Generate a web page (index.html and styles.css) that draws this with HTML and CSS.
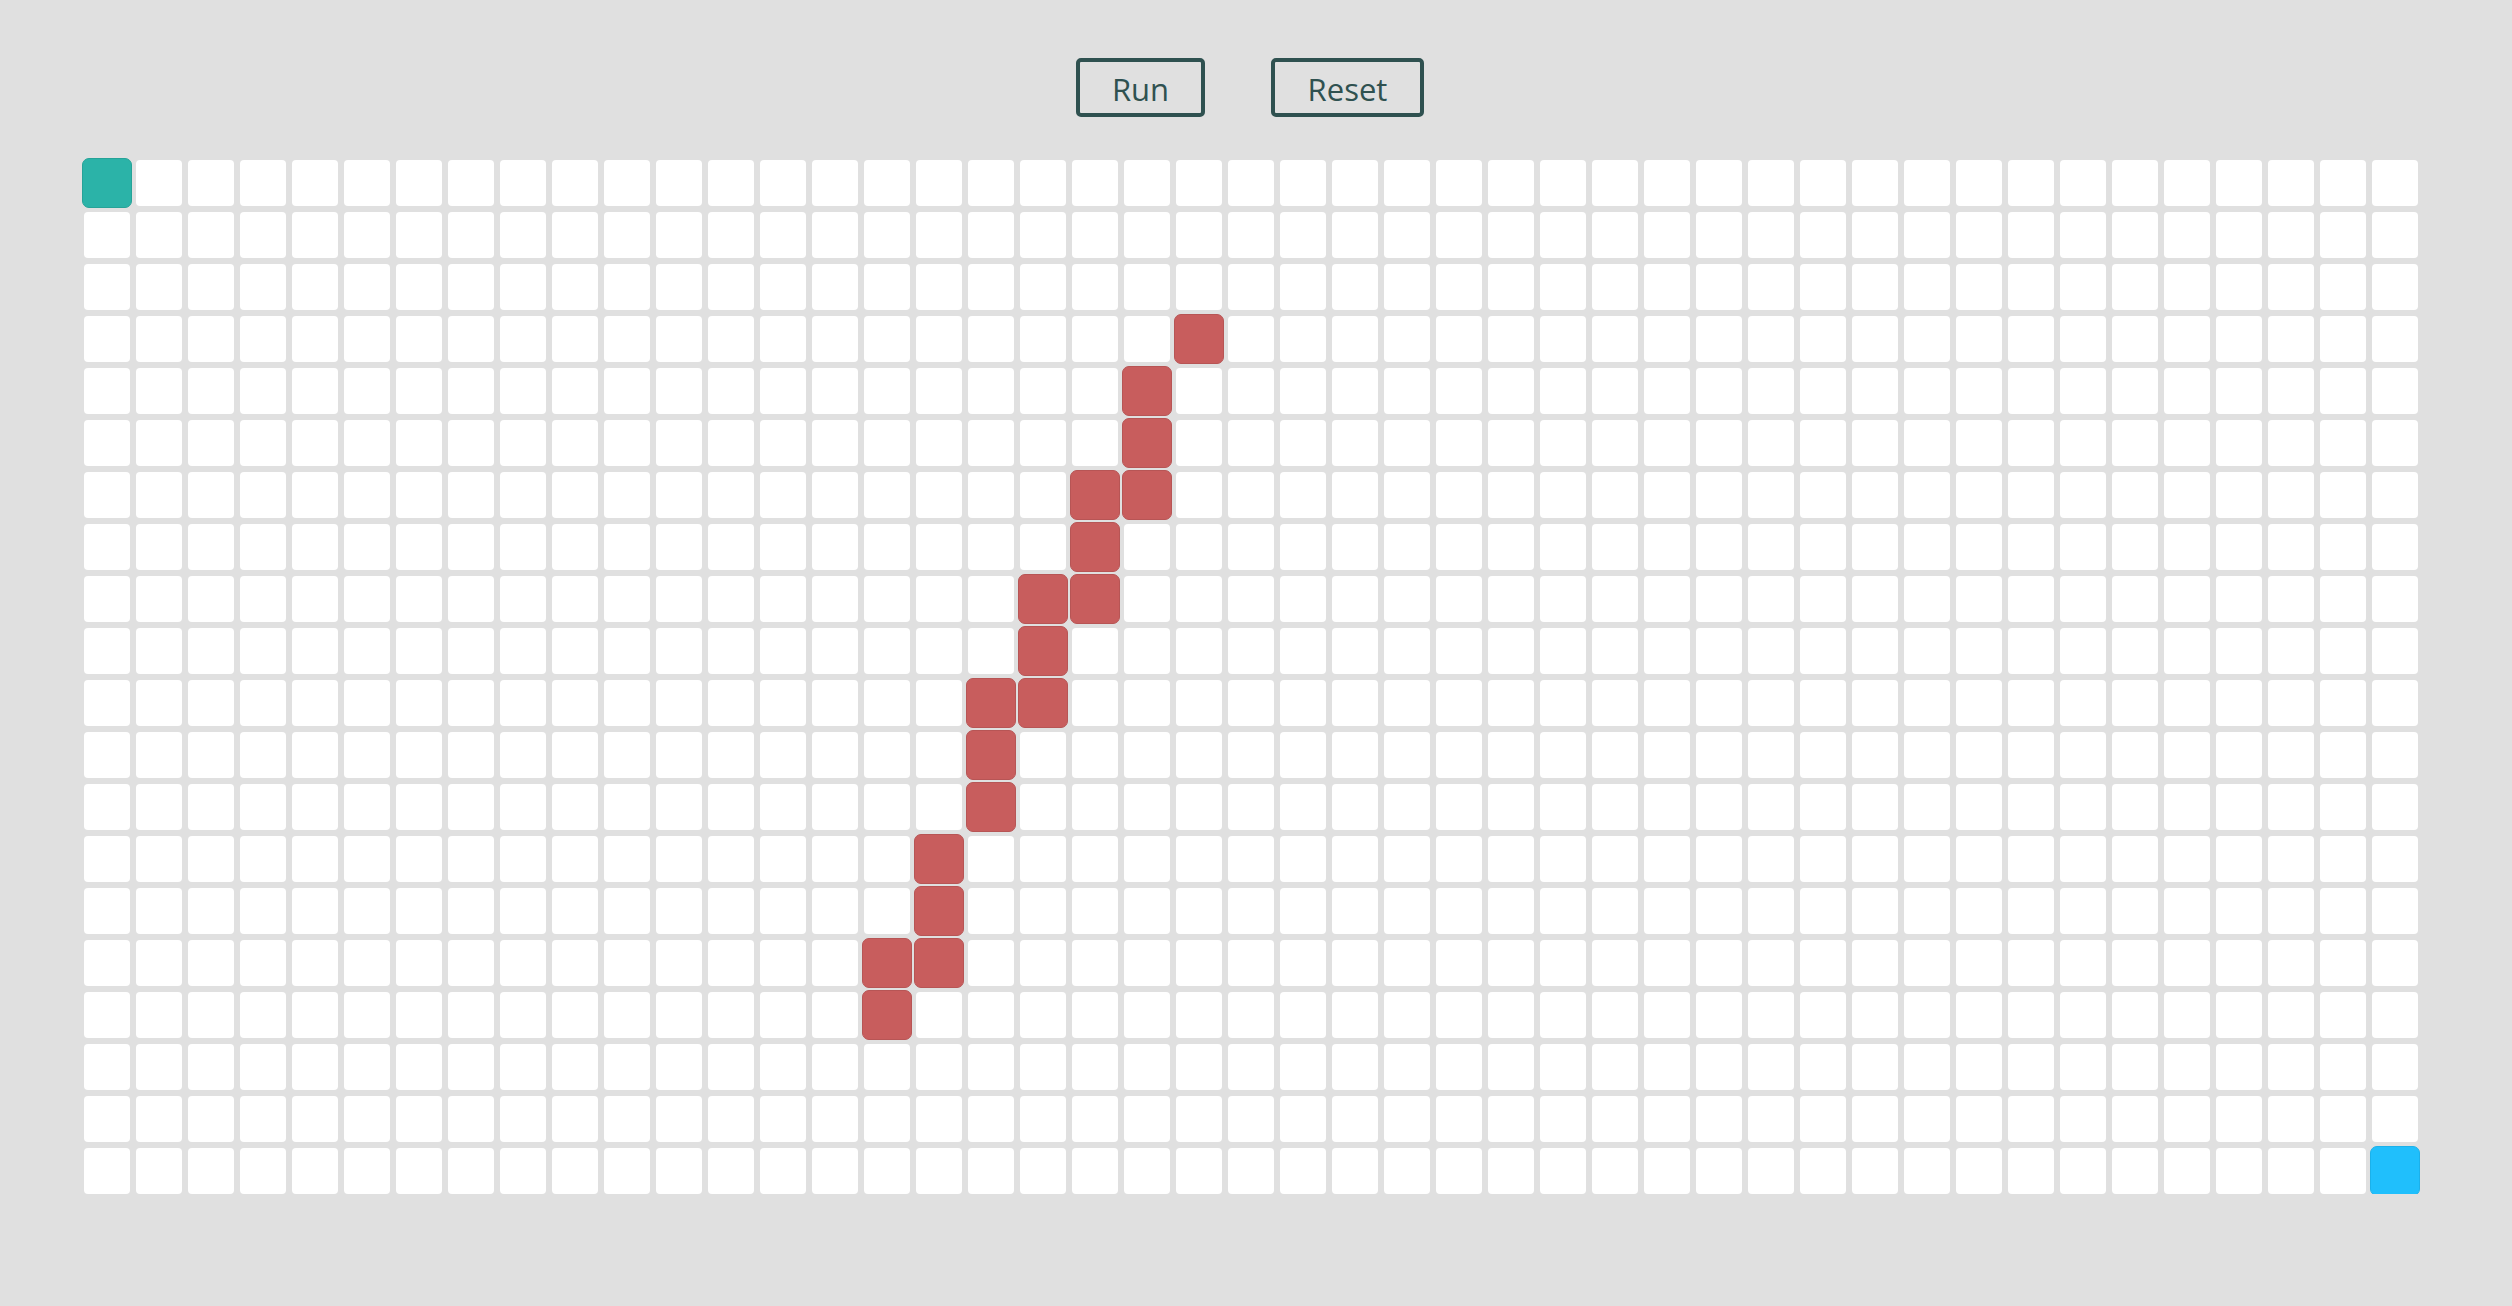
FILE: index.html
```html
<!DOCTYPE html>
<html lang="en">
<head>
<meta charset="utf-8">
<title>Pathfinding</title>
<link rel="stylesheet" href="styles.css">
</head>
<body>
<main class="app">
  <div class="controls">
    <button class="btn btn-run">Run</button>
    <button class="btn btn-reset">Reset</button>
  </div>
  <div class="grid" id="grid"></div>
</main>
<script src="script.js"></script>
</body>
</html>
```
FILE: styles.css
```css
html, body {
  margin: 0;
  padding: 0;
  background: #e0e0e0;
  font-family: "Open Sans", Lato, "Liberation Sans", sans-serif;
}

.app {
  padding: 58px 0 0 84px;
  width: 2334px;
}

.controls {
  display: flex;
  justify-content: center;
  gap: 66px;
  height: 59px;
  margin-bottom: 43px;
  padding-right: 2px;
}

.btn {
  box-sizing: border-box;
  height: 59px;
  border: 4px solid #2f5150;
  border-radius: 5px;
  background: transparent;
  color: #2f5150;
  font-family: "Open Sans", Lato, "Liberation Sans", sans-serif;
  font-size: 31px;
  line-height: 1;
  padding: 3px 0 0;
  cursor: pointer;
}

.btn-run { width: 129px; }
.btn-reset { width: 153px; }

.grid {
  display: grid;
  grid-template-columns: repeat(45, 46px);
  grid-auto-rows: 46px;
  gap: 6px;
}

.cell {
  background: #ffffff;
  border-radius: 4px;
  position: relative;
}

.cell.wall,
.cell.start,
.cell.end {
  margin: -2px;
  border-radius: 7px;
  border: 1px solid transparent;
}

.cell.wall {
  background: #c85d5d;
  border-color: #b75555;
}

.cell.start {
  background: #2bb3a8;
  border-color: #26a398;
}

.cell.end {
  background: #20bffc;
  border-color: #1cb1ea;
}
```
FILE: script.js
```js
(function () {
  var cols = 45, rows = 20;
  var walls = [
    [3,21],[4,20],[5,20],[6,19],[6,20],[7,19],[8,18],[8,19],[9,18],
    [10,17],[10,18],[11,17],[12,17],[13,16],[14,16],[15,15],[15,16],[16,15]
  ];
  var set = {};
  walls.forEach(function (w) { set[w[0] + ',' + w[1]] = true; });
  var grid = document.getElementById('grid');
  for (var r = 0; r < rows; r++) {
    for (var c = 0; c < cols; c++) {
      var d = document.createElement('div');
      d.className = 'cell';
      if (r === 0 && c === 0) d.className += ' start';
      else if (r === rows - 1 && c === cols - 1) d.className += ' end';
      else if (set[r + ',' + c]) d.className += ' wall';
      grid.appendChild(d);
    }
  }
})();
```
